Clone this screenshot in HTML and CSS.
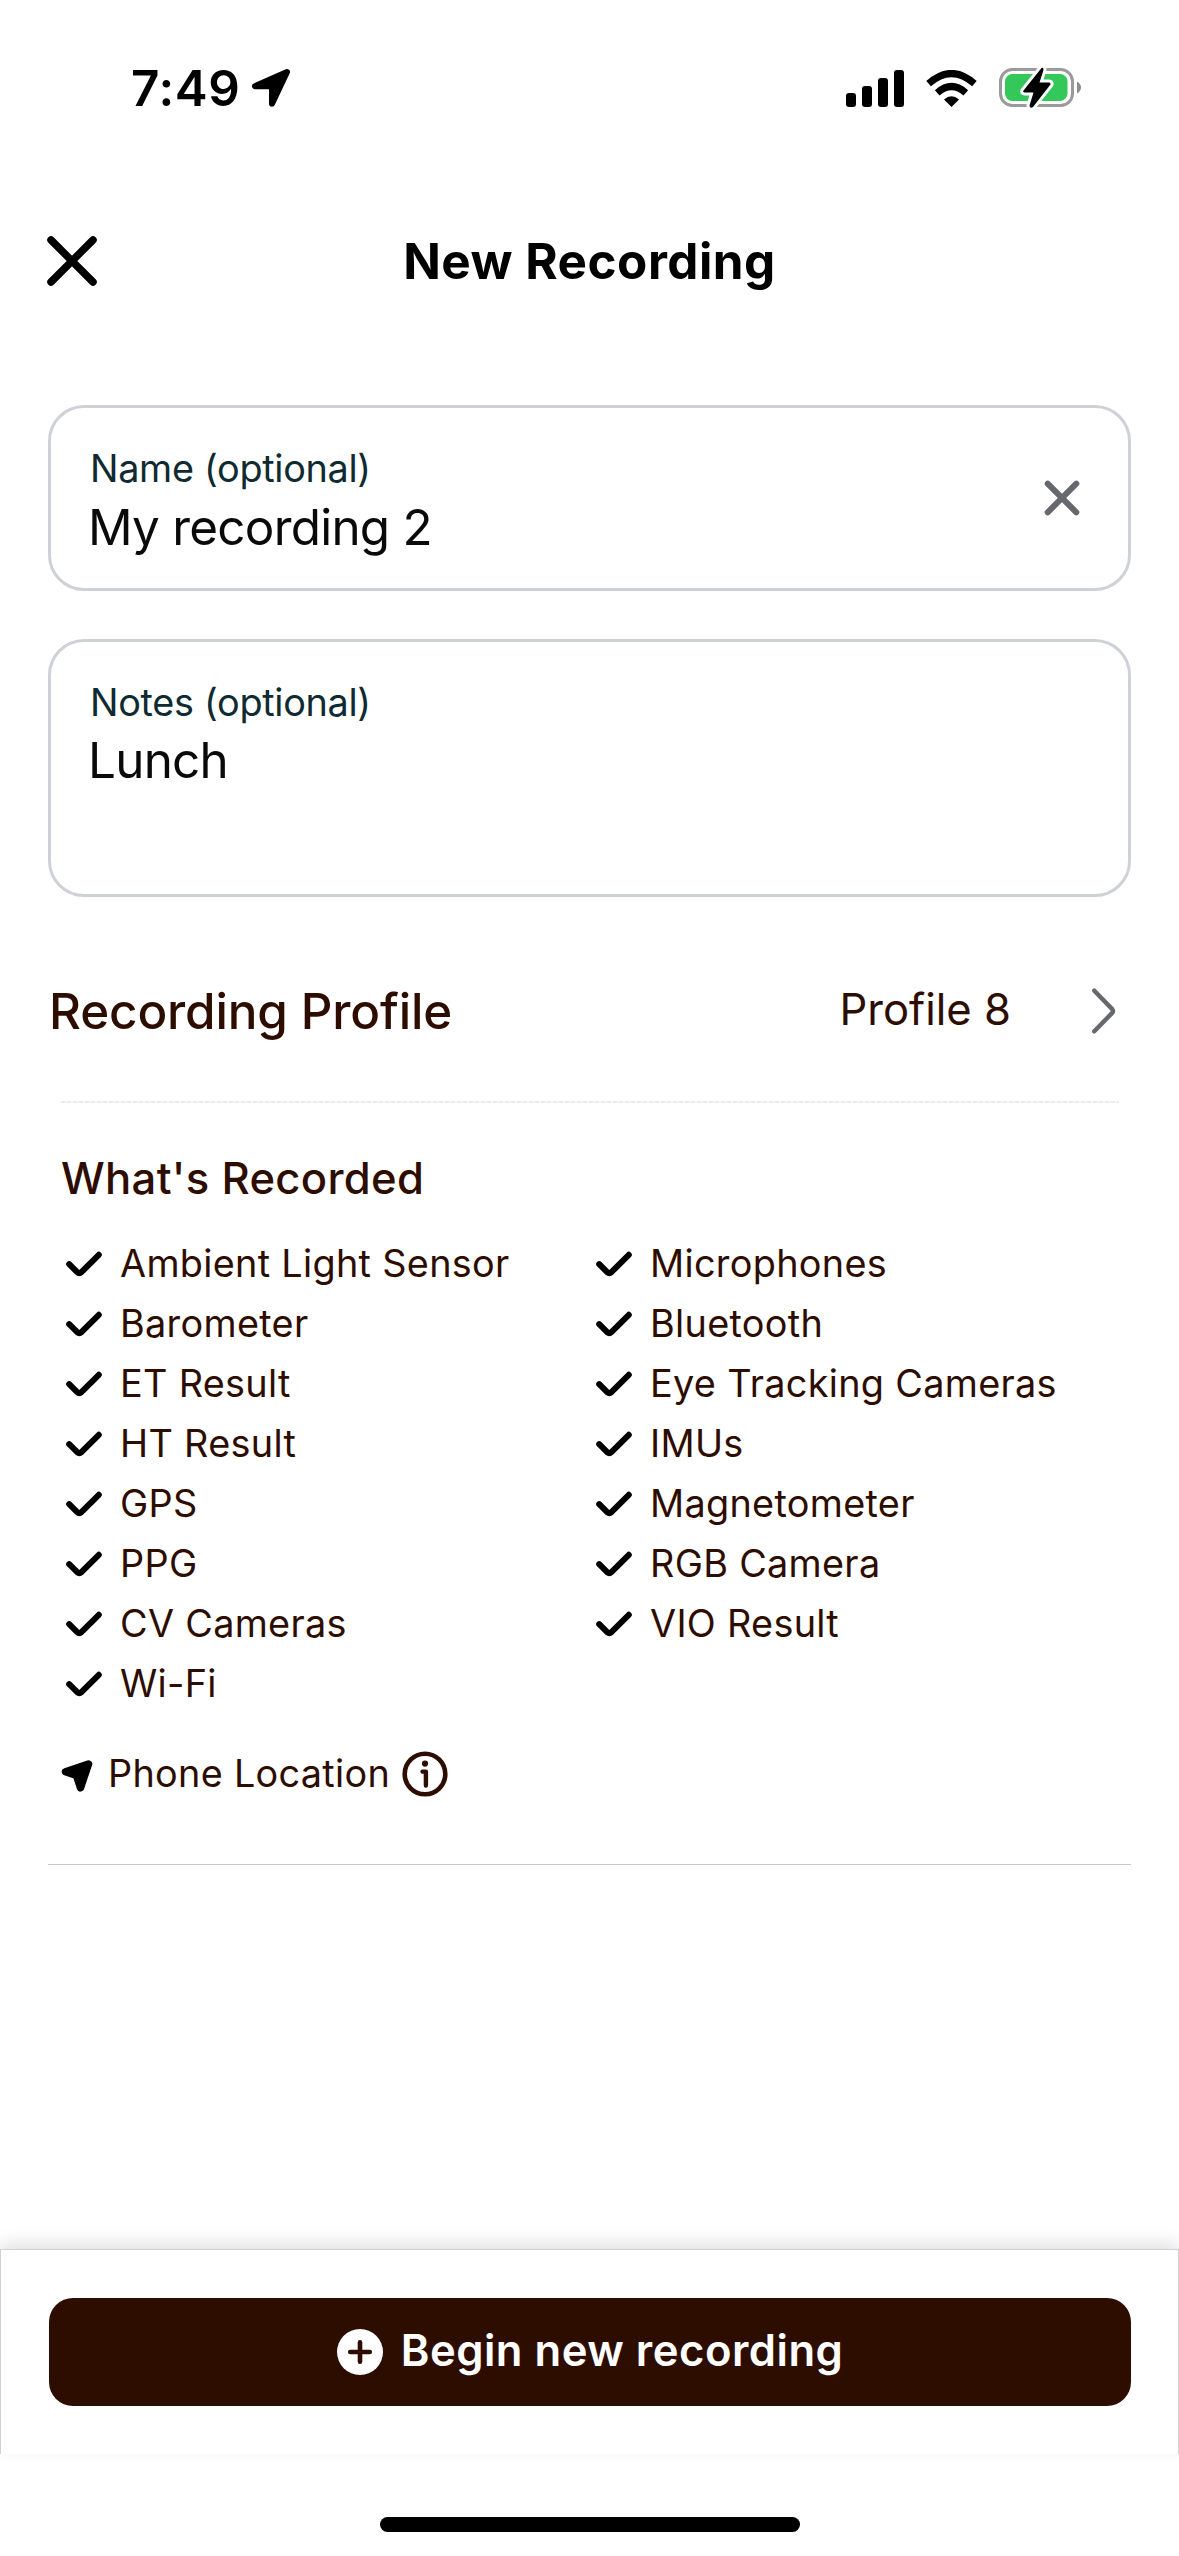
FILE: index.html
```html
<!DOCTYPE html>
<html lang="en">
<head>
<meta charset="utf-8">
<title>New Recording</title>
<link rel="stylesheet" href="styles.css">
</head>
<body>
<svg class="defs" aria-hidden="true">
  <symbol id="check" viewBox="0 0 36 26"><path d="M3.2 13.2 11.2 21.2Q13.3 23 15.4 21.2L32.8 3.8" fill="none" stroke="#000" stroke-width="6" stroke-linecap="round" stroke-linejoin="round"/></symbol>
</svg>
<div class="screen">
  <header class="status">
    <div class="status-left">
      <span class="time">7:49</span>
      <svg class="arrow" width="40" height="40" viewBox="0 0 40 40"><path d="M36 4 4 18.2H21V35.8Z" fill="#000" stroke="#000" stroke-width="6" stroke-linejoin="round"/></svg>
    </div>
    <div class="status-right">
      <svg width="58" height="37" viewBox="0 0 58 37"><rect y="23" width="10" height="14" rx="3"/><rect x="16" y="16" width="10" height="21" rx="3"/><rect x="32" y="8" width="10" height="29" rx="3"/><rect x="48" width="10" height="37" rx="3"/></svg>
      <svg class="wifi" width="51" height="37" viewBox="0 0 51 37"><path d="M25.500 37 18 29.400Q25.500 23.200 33 29.400Z"/><path d="M11.200 22.800Q25.500 10.200 39.800 22.800" fill="none" stroke="#000" stroke-width="7"/><path d="M2.600 13.600Q25.500-6.600 48.400 13.600" fill="none" stroke="#000" stroke-width="7"/></svg>
      <svg class="battery" width="83" height="42" viewBox="0 0 83 42"><rect x="1.500" y="2.500" width="72" height="36" rx="12" fill="none" stroke="#9a9a9a" stroke-width="3"/><path d="M78 14.500Q82 17 82 20.500T78 26.500Z" fill="#8c8c8c"/><rect x="6" y="7" width="62.500" height="27" rx="7.500" fill="#34c759"/><path d="M42.500 1 24.500 23.500Q23.500 25.300 25.500 25.500H34.500L30.500 38.500Q31 42 34 40L51.500 17.500Q52 15.500 50 15.400H40.500L44.500 3Q44.500 0 42.500 1Z" fill="#000" stroke="#fff" stroke-width="6" paint-order="stroke" stroke-linejoin="round"/></svg>
    </div>
  </header>

  <nav class="titlebar">
    <svg width="50" height="50" viewBox="0 0 50 50"><path d="M4 4 46 46M46 4 4 46" stroke="#000" stroke-width="7.500" stroke-linecap="round"/></svg>
    <h1 class="title">New Recording</h1>
  </nav>

  <main class="content">
    <div class="field name-field">
      <div class="field-body">
        <div class="label">Name (optional)</div>
        <div class="value">My recording 2</div>
      </div>
      <svg width="36" height="36" viewBox="0 0 36 36"><path d="M3.700 3.700 32.300 32.300M32.300 3.700 3.700 32.300" stroke="#65696e" stroke-width="6" stroke-linecap="round"/></svg>
    </div>
    <div class="field notes-field">
      <div class="field-body">
        <div class="label">Notes (optional)</div>
        <div class="value">Lunch</div>
      </div>
    </div>

    <div class="profile-row">
      <span class="profile-title">Recording Profile</span>
      <span class="profile-value">Profile 8</span>
      <svg width="24" height="46" viewBox="0 0 24 46"><path d="M2.300 2.700 20.200 21.100Q21.800 23 20.200 24.900L2.300 43.300" fill="none" stroke="#65696e" stroke-width="4.400" stroke-linecap="round" stroke-linejoin="round"/></svg>
    </div>
    <div class="dashes"></div>

    <section class="recorded">
      <h2 class="section-title">What's Recorded</h2>
      <ul class="sensors">
        <li><svg class="check"><use href="#check"/></svg>Ambient Light Sensor</li>
        <li><svg class="check"><use href="#check"/></svg>Barometer</li>
        <li><svg class="check"><use href="#check"/></svg>ET Result</li>
        <li><svg class="check"><use href="#check"/></svg>HT Result</li>
        <li><svg class="check"><use href="#check"/></svg>GPS</li>
        <li><svg class="check"><use href="#check"/></svg>PPG</li>
        <li><svg class="check"><use href="#check"/></svg>CV Cameras</li>
        <li><svg class="check"><use href="#check"/></svg>Wi-Fi</li>
        <li><svg class="check"><use href="#check"/></svg>Microphones</li>
        <li><svg class="check"><use href="#check"/></svg>Bluetooth</li>
        <li><svg class="check"><use href="#check"/></svg>Eye Tracking Cameras</li>
        <li><svg class="check"><use href="#check"/></svg>IMUs</li>
        <li><svg class="check"><use href="#check"/></svg>Magnetometer</li>
        <li><svg class="check"><use href="#check"/></svg>RGB Camera</li>
        <li><svg class="check"><use href="#check"/></svg>VIO Result</li>
      </ul>
      <div class="location">
        <svg class="pointer" width="32" height="34" viewBox="0 0 32 34"><path d="M27.500 5 4.500 12.800 15.500 16.500 19.500 28.800Z" fill="#000" stroke="#000" stroke-width="7.500" stroke-linejoin="round"/></svg>
        <span>Phone Location</span>
        <svg class="info" width="46" height="46" viewBox="0 0 46 46"><circle cx="23" cy="23" r="20.300" fill="none" stroke="#2d0d00" stroke-width="4.600"/><circle cx="23" cy="12.600" r="3.100" fill="#2d0d00"/><path d="M20.500 20.600H23.900V34.500" fill="none" stroke="#2d0d00" stroke-width="4.400" stroke-linecap="round" stroke-linejoin="round"/></svg>
      </div>
    </section>
    <div class="rule"></div>
  </main>

  <footer class="action-bar">
    <div class="button">
      <svg width="46" height="46" viewBox="0 0 46 46"><circle cx="23" cy="23" r="23" fill="#fff"/><path d="M23 13.200V32.800M13.200 23H32.800" stroke="#2d0d00" stroke-width="4.600" stroke-linecap="round"/></svg>
      <span>Begin new recording</span>
    </div>
  </footer>
  <div class="home"><div class="home-bar"></div></div>
</div>
</body>
</html>
```
FILE: styles.css
```css
* { box-sizing: border-box; }

body {
  margin: 0;
  background: #fff;
  color: #2d0d00;
  font-family: Inter, "Liberation Sans", sans-serif;
}

svg { display: block; flex: none; }
.defs { position: absolute; width: 0; height: 0; }

.screen {
  display: flex;
  flex-direction: column;
  width: 1179px;
  height: 2556px;
  overflow: hidden;
}

/* Status bar */
.status {
  display: flex;
  justify-content: space-between;
  align-items: center;
  height: 176px;
  padding: 0 97px 0 131px;
  color: #000;
}
.status-left, .status-right { display: flex; align-items: center; }
.time { font-size: 49.4px; font-weight: 560; line-height: 60px; letter-spacing: 0.6px; }
.arrow { margin-left: 11px; }
.wifi { margin-left: 22px; }
.battery { margin-left: 22px; }

/* Title bar */
.titlebar {
  display: grid;
  grid-template-columns: 50px 1fr 50px;
  align-items: center;
  height: 170px;
  padding: 0 47px;
  color: #000;
}
.title {
  margin: -1px 0 0;
  text-align: center;
  font-size: 49.4px;
  font-weight: 680;
  line-height: 60px;
  letter-spacing: 0.5px;
}

.content { padding: 59px 48px 0; }

/* Form fields */
.field {
  display: flex;
  justify-content: space-between;
  align-items: center;
  border: 3px solid #ced2d7;
  border-radius: 36px;
  padding: 0 48px 0 36px;
}
.name-field { height: 186px; }
.notes-field { height: 258px; margin-top: 48px; align-items: flex-start; padding-top: 36px; }
.label { padding-left: 3px; font-size: 37.8px; line-height: 48px; letter-spacing: -0.3px; color: #0f2a30; }
.value { margin-top: 4px; padding-left: 1px; font-size: 49.4px; line-height: 60px; letter-spacing: -0.75px; color: #0a0a0a; }
.name-field .field-body { height: 180px; padding-top: 36px; }
.name-field .value { margin-top: 5px; }

/* Profile selector */
.profile-row {
  display: flex;
  align-items: center;
  height: 180px;
  margin-top: 24px;
  padding: 0 15px 0 1px;
}
.profile-title { font-size: 49.4px; font-weight: 500; line-height: 60px; letter-spacing: -0.15px; }
.profile-value { margin: -2px 81px 0 auto; font-size: 43.6px; line-height: 54px; }
.dashes {
  height: 2px;
  margin: 0 12px 0 13px;
  background: repeating-linear-gradient(90deg, #ebebeb 0 4px, #f8f8f8 4px 6px);
}

/* Recorded sensors */
.recorded { padding: 46px 13px 0; }
.section-title { margin: 0; font-size: 43.6px; font-weight: 500; line-height: 60px; letter-spacing: 0.32px; }
.sensors {
  display: grid;
  grid-template-rows: repeat(8, 60px);
  grid-auto-columns: 530px;
  grid-auto-flow: column;
  margin: 24px 0 0;
  padding: 0 0 0 5px;
  list-style: none;
}
.sensors li {
  display: flex;
  align-items: center;
  gap: 18px;
  font-size: 37.8px;
  letter-spacing: 0.31px;
  white-space: nowrap;
}
.check { width: 36px; height: 26px; margin-top: 2px; }
.location {
  display: flex;
  align-items: center;
  height: 60px;
  margin-top: 30px;
  font-size: 37.8px;
  letter-spacing: 0.3px;
}
.pointer { margin: 5px 15px 0 0; }
.info { margin: 2px 0 0 12px; }
.rule { height: 1px; margin-top: 61px; background: #c8c8c8; }

/* Bottom action */
.action-bar {
  height: 205px;
  margin-top: auto;
  padding: 48px 47px 0 48px;
  border: 1px solid #ced2d7;
  border-bottom: 0;
  box-shadow: 0 -6px 16px rgba(0, 0, 0, 0.12);
}
.button {
  display: flex;
  justify-content: center;
  align-items: center;
  gap: 18px;
  height: 108px;
  border-radius: 24px;
  background: #2d0d00;
  color: #fff;
  font-size: 43.6px;
  font-weight: 560;
  line-height: 54px;
  letter-spacing: 0.5px;
}
.button span { margin-top: -3px; }

.home { display: flex; justify-content: center; height: 102px; padding: 63px 0 0 1px; }
.home-bar { width: 420px; height: 15px; border-radius: 8px; background: #000; }
```
